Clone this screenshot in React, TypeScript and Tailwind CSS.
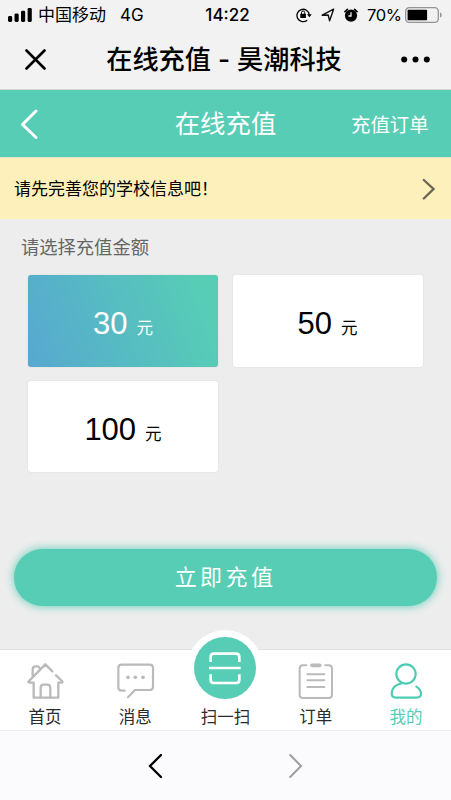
import React from "react";

const amounts = [30, 50, 100];

/* status bar: carrier on the left, clock in the middle, indicators on the right */
function StatusBar() {
  return (
    <div className="grid h-[30px] grid-cols-[205px_46px_200px] items-center font-['Inter','Noto_Sans_CJK_SC',sans-serif] text-[17px] leading-[30px] text-black">
      <div className="flex items-center pl-2">
        <svg width="24" height="15" viewBox="0 0 24 15" className="mr-[6px]">
          <rect x="0" y="8" width="4.2" height="6" rx="1.4" />
          <rect x="6.5" y="5.5" width="4.2" height="8.5" rx="1.4" />
          <rect x="13" y="2.7" width="4.2" height="11.3" rx="1.4" />
          <rect x="19.6" y="0" width="4.2" height="14" rx="1.4" />
        </svg>
        <span>中国移动</span>
        <span className="ml-[14px]">4G</span>
      </div>
      <span className="-ml-px whitespace-nowrap text-center text-[17px] font-medium">14:22</span>
      <div className="flex items-center">
        <svg width="16" height="16" viewBox="0 0 16 16" className="ml-[45px]" fill="none" stroke="#000" strokeWidth="1.3">
          <path d="M11.2 13.2A6.2 6.2 0 1 1 13.3 7.6" />
          <path d="M11 7.2h4.8l-2.4 3z" fill="#000" stroke="none" />
          <rect x="4.3" y="6.8" width="5.6" height="4.2" rx="0.5" fill="#000" stroke="none" />
          <path d="M5.5 7V5.6a1.6 1.6 0 0 1 3.2 0V7" strokeWidth="1" />
        </svg>
        <svg width="14" height="14" viewBox="0 0 14 14" className="ml-[9px]" fill="none" stroke="#111" strokeWidth="1.4" strokeLinejoin="round">
          <path d="M1.2 7.2 12.6 1.2 8.6 12.8 7.2 7z" />
        </svg>
        <svg width="14" height="15" viewBox="0 0 14 15" className="ml-[9px]">
          <circle cx="7" cy="7.6" r="6.1" />
          <path d="M1 3.6 3.4 1.4M13 3.6 10.6 1.4" stroke="#000" strokeWidth="1.7" strokeLinecap="round" />
          <path d="M7 4.2v3.8H4.4" fill="none" stroke="#f2f2f2" strokeWidth="1.3" />
        </svg>
        <span className="ml-[9px] w-[38px] whitespace-nowrap text-[16.5px] tracking-[-0.4px]">70%</span>
        <svg width="37" height="16" viewBox="0 0 37 16">
          <rect x="0.7" y="0.7" width="32.6" height="14.6" rx="3.6" fill="none" stroke="#949494" strokeWidth="1.3" />
          <rect x="2.6" y="2.8" width="19.5" height="10.4" rx="0.8" />
          <path d="M35 5.2q1.8 1 1.8 2.8T35 10.8z" fill="#949494" />
        </svg>
      </div>
    </div>
  );
}

function HomeIcon() {
  return (
    <svg width="37" height="36" viewBox="81 54 111 108" fill="none" stroke="#bababa" strokeWidth="7" strokeLinecap="round" strokeLinejoin="round">
      <path d="M157 79 136 58 86 109q-2 4 3 4h12v45h74v-45h10q4-1 1-5L168 91" />
      <path d="M98 93V73q0-9 9-9h7l5 5" />
      <path d="M122 157v-29q0-9 9-9h11q9 0 9 9v29" />
    </svg>
  );
}

function MessageIcon() {
  return (
    <svg width="39" height="36" viewBox="347 54 117 108" fill="none" stroke="#bababa" strokeWidth="6.5" strokeLinecap="round" strokeLinejoin="round">
      <path d="M373 137h-9q-10 0-10-10V69q0-10 10-10h84q10 0 10 10v56q0 10-10 10h-44l-21 22" />
      <g fill="#bababa" stroke="none">
        <circle cx="383" cy="97" r="5.5" />
        <circle cx="405" cy="97" r="5.5" />
        <circle cx="428" cy="97" r="5.5" />
      </g>
    </svg>
  );
}

function OrderIcon() {
  return (
    <svg width="36" height="36" viewBox="219 54 108 108" fill="none" stroke="#bababa" strokeWidth="6" strokeLinecap="round">
      <path d="M244 61h-10q-10 0-10 10v78q0 10 10 10h77q10 0 10-10V71q0-10-10-10h-10" />
      <path d="M261 61h23" strokeWidth="11" />
      <path d="M247 88h51M247 106h51M247 126h51" />
    </svg>
  );
}

function UserIcon() {
  return (
    <svg width="36" height="36" viewBox="489 54 108 108" fill="none" stroke="#4ccdb2" strokeWidth="6.5" strokeLinecap="round">
      <circle cx="543" cy="87" r="29" />
      <path d="M529 115C508 120 500 132 500 145q0 13 13 13h62q13 0 13-13 0-11-14-20" />
    </svg>
  );
}

function Tab({ label, active, children }: { label: string; active?: boolean; children: React.ReactNode }) {
  return (
    <a className="flex flex-col items-center pt-[13px]">
      {children}
      <span className={`mt-[6px] text-[16.5px] leading-6 ${active ? "text-[#57cdb5]" : "text-[#2b2b2b]"}`}>{label}</span>
    </a>
  );
}

export default function App() {
  return (
    <div className="flex h-[800px] w-[451px] flex-col overflow-hidden bg-[#ededed] font-['Liberation_Sans','Noto_Sans_CJK_SC',sans-serif]">
      {/* browser chrome */}
      <div className="h-[90px] shrink-0 border-b border-[#d5d5d5] bg-[#f2f2f2]">
        <StatusBar />
        <div className="flex h-[59px] items-center justify-between pl-[25px] pr-[21px]">
          <svg width="21" height="21" viewBox="0 0 21 21" stroke="#000" strokeWidth="2.6" strokeLinecap="round">
            <path d="M1.5 1.5l18 18M19.5 1.5l-18 18" />
          </svg>
          <h1 className="ml-[1px] whitespace-nowrap pt-px font-['Inter','Noto_Sans_CJK_SC',sans-serif] text-[26.2px] font-medium leading-[58px] text-black">在线充值 - 昊潮科技</h1>
          <svg width="29" height="7" viewBox="0 0 29 7">
            <circle cx="3.2" cy="3.5" r="3" />
            <circle cx="14.5" cy="3.5" r="3" />
            <circle cx="25.8" cy="3.5" r="3" />
          </svg>
        </div>
      </div>

      {/* page header */}
      <header className="grid h-[67px] shrink-0 grid-cols-[100px_1fr_100px] items-center bg-[#57cdb5] text-white">
        <svg width="18" height="30" viewBox="0 0 18 30" className="ml-[20px]" fill="none" stroke="#fff" strokeWidth="3" strokeLinecap="round" strokeLinejoin="round">
          <path d="M16 2 2.5 15.5 16 28.5" />
        </svg>
        <h2 className="pt-[2px] text-center text-[25.4px] leading-[65px]">在线充值</h2>
        <span className="whitespace-nowrap pt-[4px] text-[19.4px]">充值订单</span>
      </header>

      {/* notice */}
      <div className="flex h-[62px] shrink-0 items-center justify-between border-t border-[#e2e2cf] bg-[#fef0bb] pl-[14px] pr-4">
        <span className="pt-[2px] text-[17px] text-black">请先完善您的学校信息吧！</span>
        <svg width="13" height="22" viewBox="0 0 13 22" fill="none" stroke="#6b6553" strokeWidth="2.3" strokeLinecap="round">
          <path d="M1.8 2 11.5 11 1.8 20.5" />
        </svg>
      </div>

      {/* amounts */}
      <main className="h-[430px] shrink-0">
        <p className="pl-[21px] pt-[15px] text-[18.3px] leading-7 text-[#666]">请选择充值金额</p>
        <div className="mt-[13px] grid grid-cols-[190px_190px] gap-x-[14.5px] gap-y-[14px] pl-[28px]">
          {amounts.map((amount) => (
            <button
              key={amount}
              className={`flex h-[91.5px] items-baseline justify-center rounded-[3px] pt-[25px] shadow-[0_0_2px_rgba(0,0,0,0.1)] ${
                amount === 30 ? "bg-[linear-gradient(70deg,#57a8d0,#57cdb5_90%)] text-white" : "bg-white text-black"
              }`}
            >
              <span className="text-[31px] leading-[48px]">{amount}</span>
              <span className="ml-[9px] text-[16.5px]">元</span>
            </button>
          ))}
        </div>
        <button className="ml-[14px] mt-[77px] h-[56.5px] w-[423px] rounded-full bg-[#57cdb5] text-[22px] tracking-[3.4px] text-white shadow-[0_0_10px_#57cdb5]">
          立即充值
        </button>
      </main>

      {/* tab bar, the scan button sticks out above it */}
      <nav className="grid h-[82px] shrink-0 grid-cols-5 border-b border-t border-b-[#ebebeb] border-t-[#e0e0e0] bg-white">
        <Tab label="首页"><HomeIcon /></Tab>
        <Tab label="消息"><MessageIcon /></Tab>
        <a className="-mt-[20px] flex flex-col items-center">
          <span className="flex size-[76px] items-center justify-center rounded-full bg-white">
            <svg width="62" height="62" viewBox="44 49 186 186" fill="none" stroke="#fff" strokeWidth="8">
              <circle cx="137" cy="142" r="93" fill="#57cdb5" stroke="none" />
              <path d="M94 124v-15q0-10 10-10h66q10 0 10 10v15M89 142h95M94 161v16q0 10 10 10h66q10 0 10-10v-16" />
            </svg>
          </span>
          <span className="-mt-[1px] text-[16.5px] leading-6 text-[#2b2b2b]">扫一扫</span>
        </a>
        <Tab label="订单"><OrderIcon /></Tab>
        <Tab label="我的" active><UserIcon /></Tab>
      </nav>

      {/* browser back / forward */}
      <div className="flex flex-1 items-start gap-[127px] bg-[#fbfbfd] pl-[148px] pt-[22px]">
        <svg width="14" height="26" viewBox="0 0 14 26" fill="none" stroke="#000" strokeWidth="2.3" strokeLinecap="round">
          <path d="M13 2 2 13 13 24" />
        </svg>
        <svg width="14" height="26" viewBox="0 0 14 26" fill="none" stroke="#a0a0a0" strokeWidth="2.1" strokeLinecap="round">
          <path d="M1.2 2 12 13 1.2 24" />
        </svg>
      </div>
    </div>
  );
}
